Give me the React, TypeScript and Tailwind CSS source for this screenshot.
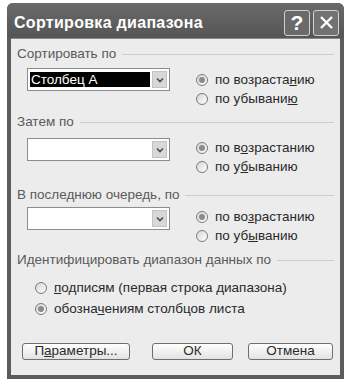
import React from "react";

const FONT = { fontFamily: '"Liberation Sans", Arial, sans-serif' };

function GroupLabel({ text }: { text: string }) {
  return (
    <div className="flex items-center gap-[6px] h-[14px] pr-[4px]">
      <span className="text-[13.5px] leading-[14px] text-[#5a5a5a] whitespace-nowrap">{text}</span>
      <div className="flex-1 border-t border-[#cdcdcd]" />
    </div>
  );
}

function Radio({ checked, label }: { checked?: boolean; label: React.ReactNode }) {
  return (
    <div className="flex items-center gap-[7px] h-[19px]">
      <span className="w-[12px] h-[12px] rounded-full border border-[#7a7a7a] bg-gradient-to-br from-[#d6d6d6] to-white flex items-center justify-center shrink-0">
        {checked && <span className="w-[6px] h-[6px] rounded-full bg-[#8a8a8a]" />}
      </span>
      <span className="text-[13.5px] leading-[14px] text-[#2a2a2a] whitespace-nowrap">{label}</span>
    </div>
  );
}

function Combo({ value }: { value?: string }) {
  return (
    <div className="w-[143px] h-[23px] border border-[#8c8c8c] bg-white flex items-stretch p-[2px]">
      <div className="flex-1 flex items-center">
        {value && (
          <span className="bg-black text-white text-[13.5px] leading-[15px] w-full pl-[1px]">{value}</span>
        )}
      </div>
      <div className="w-[15px] ml-[2px] bg-[#d8d8d8] border border-[#c4c4c4] flex items-center justify-center">
        <svg width="8" height="6" viewBox="0 0 8 6">
          <path d="M1 1.5 L4 4.5 L7 1.5" stroke="#4a4a4a" strokeWidth="1.6" fill="none" />
        </svg>
      </div>
    </div>
  );
}

function SortSection({
  title,
  value,
  up,
  down,
  className,
  comboGap,
  radioGap,
}: {
  title: string;
  value?: string;
  up: React.ReactNode;
  down: React.ReactNode;
  className: string;
  comboGap: string;
  radioGap: string;
}) {
  return (
    <div className={`flex flex-col shrink-0 ${className}`}>
      <GroupLabel text={title} />
      <div className={`flex h-[41px] ${comboGap}`}>
        <div className="ml-[10px]">
          <Combo value={value} />
        </div>
        <div className={`ml-[26px] flex flex-col ${radioGap}`}>
          <Radio checked label={up} />
          <Radio label={down} />
        </div>
      </div>
    </div>
  );
}

function Btn({ children, className }: { children: React.ReactNode; className: string }) {
  return (
    <div
      className={`h-[17px] rounded-[3px] border border-[#6e6e6e] bg-gradient-to-b from-white to-[#e2e2e2] flex items-center justify-center text-[13.5px] text-[#2a2a2a] ${className}`}
    >
      {children}
    </div>
  );
}

export default function App() {
  return (
    <div className="w-[354px] h-[385px] bg-white pt-[3px] pl-[7px]" style={FONT}>
      <div className="w-[337px] h-[376px] bg-[#5c5c5c] rounded-t-[6px] flex flex-col px-[4px] pb-[4px]">
        {/* title bar */}
        <div className="h-[35px] shrink-0 flex items-center justify-between bg-gradient-to-b from-[#6a6a6a] to-[#555555] rounded-t-[6px] -mx-[4px] pl-[7px] pr-[5px]">
          <span className="text-white font-bold text-[16px] tracking-[0.3px] mt-[4px]">Сортировка диапазона</span>
          <div className="flex gap-[3px] mt-[4px]">
            <div className="w-[26px] h-[26px] rounded-[3px] border border-[#d0d0d0] bg-[#6a6a6a] flex items-center justify-center text-white text-[21px] font-bold leading-none">
              ?
            </div>
            <div className="w-[26px] h-[26px] rounded-[3px] border border-[#d0d0d0] bg-[#727272] flex items-center justify-center">
              <svg width="15" height="15" viewBox="0 0 15 15">
                <path d="M2 2 L13 13 M13 2 L2 13" stroke="white" strokeWidth="2.4" />
              </svg>
            </div>
          </div>
        </div>
        {/* body */}
        <div className="flex-1 min-h-0 bg-[#ececec] border-t border-[#8a8a8a] flex flex-col pl-[6px] pr-[2px] pt-[8px]">
          <SortSection
            title="Сортировать по"
            value="Столбец А"
            up={<>по возраста<u>н</u>ию</>}
            down={<>по убывани<u>ю</u></>}
            className=""
            comboGap="mt-[7px]"
            radioGap="mt-[2px]"
          />
          <SortSection
            title="Затем по"
            up={<>по в<u>о</u>зрастанию</>}
            down={<>по у<u>б</u>ыванию</>}
            className="mt-[6px]"
            comboGap="mt-[9px]"
            radioGap="mt-0"
          />
          <SortSection
            title="В последнюю очередь, по"
            up={<>по во<u>з</u>растанию</>}
            down={<>по уб<u>ы</u>ванию</>}
            className="mt-[9px]"
            comboGap="mt-[5px]"
            radioGap="mt-0"
          />
          <div className="mt-[5px] flex flex-col shrink-0">
            <GroupLabel text="Идентифицировать диапазон данных по" />
            <div className="ml-[18px] mt-[11px] flex flex-col gap-[2px]">
              <Radio label={<><u>п</u>одписям (первая строка диапазона)</>} />
              <Radio checked label={<>обозна<u>ч</u>ениям столбцов листа</>} />
            </div>
          </div>
          <div className="mt-[25px] flex pl-[5px] shrink-0">
            <Btn className="w-[108px]">П<u>а</u>раметры...</Btn>
            <Btn className="w-[81px] ml-[22px]">ОК</Btn>
            <Btn className="w-[85px] ml-[15px]">Отмена</Btn>
          </div>
        </div>
      </div>
    </div>
  );
}
